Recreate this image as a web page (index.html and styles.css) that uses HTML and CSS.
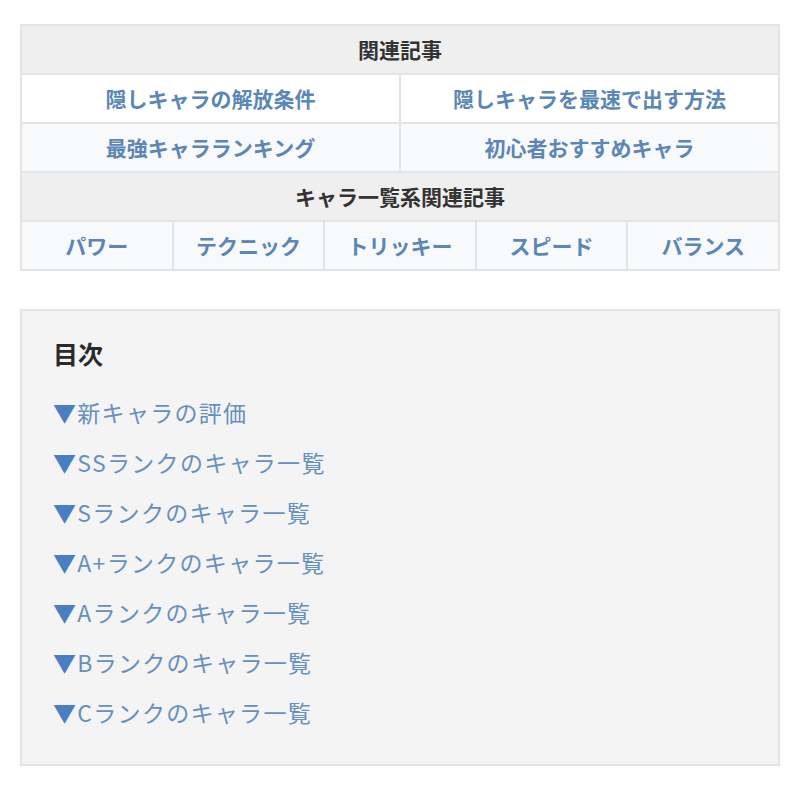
FILE: index.html
```html
<!DOCTYPE html>
<html lang="ja">
<head>
    <meta charset="UTF-8">
    <meta name="viewport" content="width=device-width, initial-scale=1.0">
    <title>キャラ一覧</title>
    <link rel="stylesheet" href="styles.css">
</head>
<body>
    <div class="page">
        <table class="related">
            <tr>
                <th colspan="10">関連記事</th>
            </tr>
            <tr class="plain">
                <td colspan="5"><a href="#">隠しキャラの解放条件</a></td>
                <td colspan="5"><a href="#">隠しキャラを最速で出す方法</a></td>
            </tr>
            <tr>
                <td colspan="5"><a href="#">最強キャラランキング</a></td>
                <td colspan="5"><a href="#">初心者おすすめキャラ</a></td>
            </tr>
            <tr>
                <th colspan="10">キャラ一覧系関連記事</th>
            </tr>
            <tr>
                <td colspan="2"><a href="#">パワー</a></td>
                <td colspan="2"><a href="#">テクニック</a></td>
                <td colspan="2"><a href="#">トリッキー</a></td>
                <td colspan="2"><a href="#">スピード</a></td>
                <td colspan="2"><a href="#">バランス</a></td>
            </tr>
        </table>

        <div class="toc">
            <p class="toc-title">目次</p>
            <ul class="toc-list">
                <li><a href="#new"><span class="mark">▼</span>新キャラの評価</a></li>
                <li><a href="#ss"><span class="mark">▼</span>SSランクのキャラ一覧</a></li>
                <li><a href="#s"><span class="mark">▼</span>Sランクのキャラ一覧</a></li>
                <li><a href="#ap"><span class="mark">▼</span>A+ランクのキャラ一覧</a></li>
                <li><a href="#a"><span class="mark">▼</span>Aランクのキャラ一覧</a></li>
                <li><a href="#b"><span class="mark">▼</span>Bランクのキャラ一覧</a></li>
                <li><a href="#c"><span class="mark">▼</span>Cランクのキャラ一覧</a></li>
            </ul>
        </div>
    </div>
</body>
</html>
```

FILE: styles.css
```css
body {
    font-family: "Noto Sans CJK JP", "Noto Sans", sans-serif;
    margin: 0;
    background-color: #fff;
    color: #333;
}
.page {
    padding: 24px 20px;
}
a {
    text-decoration: none;
}
.related {
    width: 760px;
    border-collapse: collapse;
    table-layout: fixed;
    border: 2px solid #e2e4e6;
}
.related th,
.related td {
    border: 2px solid #e2e4e6;
    text-align: center;
    font-size: 21px;
    font-weight: bold;
    line-height: 27px;
    padding: 10px 0;
}
.related th {
    background-color: #efefef;
    color: #333;
}
.related td {
    background-color: #f8f9fa;
}
.related tr.plain td {
    background-color: #fff;
}
.related a {
    color: #5a87b5;
}
.toc {
    margin-top: 38px;
    padding: 24px 31px 27px;
    background-color: #f4f4f4;
    border: 2px solid #e2e4e6;
}
.toc-title {
    margin: 0 0 16px;
    font-size: 25px;
    font-weight: bold;
    line-height: 36px;
    color: #2a2a2a;
}
.toc-list {
    list-style: none;
    margin: 0;
    padding: 0;
}
.toc-list li {
    font-size: 23px;
    line-height: 50px;
    letter-spacing: 1.3px;
}
.toc-list a {
    color: #6690bd;
}
.toc-list .mark {
    color: #4a7ec3;
}
```
